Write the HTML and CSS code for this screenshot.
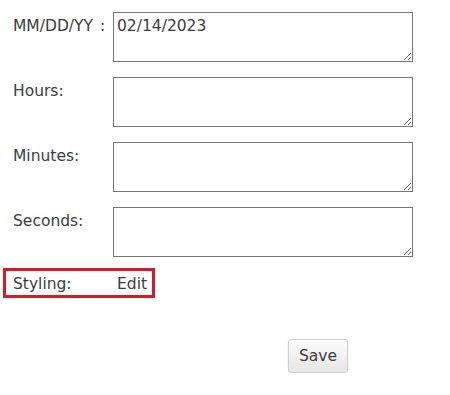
FILE: index.html
```html
<!DOCTYPE html>
<html lang="en">
<head>
  <meta charset="UTF-8">
  <title>Time Entry</title>
  <link rel="stylesheet" href="styles.css">
</head>
<body>
  <div class="form">
    <!-- Date / time fields -->
    <div class="row">
      <label class="label" for="date">MM/DD/YY :</label>
      <textarea id="date" class="field">02/14/2023</textarea>
    </div>
    <div class="row">
      <label class="label" for="hours">Hours:</label>
      <textarea id="hours" class="field"></textarea>
    </div>
    <div class="row">
      <label class="label" for="minutes">Minutes:</label>
      <textarea id="minutes" class="field"></textarea>
    </div>
    <div class="row">
      <label class="label" for="seconds">Seconds:</label>
      <textarea id="seconds" class="field"></textarea>
    </div>

    <!-- Styling -->
    <div class="styling">
      <span class="styling-label">Styling:</span>
      <a class="edit">Edit</a>
    </div>

    <div class="actions">
      <button class="save">Save</button>
    </div>
  </div>
</body>
</html>
```

FILE: styles.css
```css
body {
  margin: 0;
  font-family: "DejaVu Sans", Verdana, sans-serif;
  font-size: 15.5px;
  color: #3d3d3d;
  background: #fff;
}
.form {
  padding: 12px 0 0 13px;
}
.row {
  display: flex;
  margin-bottom: 15px;
}
.label {
  width: 100px;
  padding-top: 5px;
  line-height: 18px;
  word-spacing: 2px;
}
.field {
  box-sizing: border-box;
  width: 300px;
  height: 50px;
  margin: 0;
  padding: 4px 3px;
  border: 1px solid #767676;
  border-radius: 0;
  font-family: "DejaVu Sans", Verdana, sans-serif;
  font-size: 15.5px;
  line-height: 18px;
  color: #3d3d3d;
}
.styling {
  display: inline-flex;
  margin: -4px 0 0 -10px;
  padding: 4px 5px 2px 7px;
  border: 3px solid #d71a2a;
  line-height: 18px;
}
.styling-label {
  width: 104px;
}
.edit {
  color: #3d3d3d;
  cursor: pointer;
}
.actions {
  padding: 41px 0 0 275px;
}
.save {
  width: 60px;
  height: 34px;
  padding: 0;
  border: 1px solid #cfcfcf;
  border-radius: 3px;
  background: linear-gradient(#fdfdfd, #e6e6e6);
  box-shadow: 0 1px 2px rgba(0, 0, 0, 0.08);
  font-family: "DejaVu Sans", Verdana, sans-serif;
  font-size: 15.5px;
  color: #3d3d3d;
  cursor: pointer;
}
```
